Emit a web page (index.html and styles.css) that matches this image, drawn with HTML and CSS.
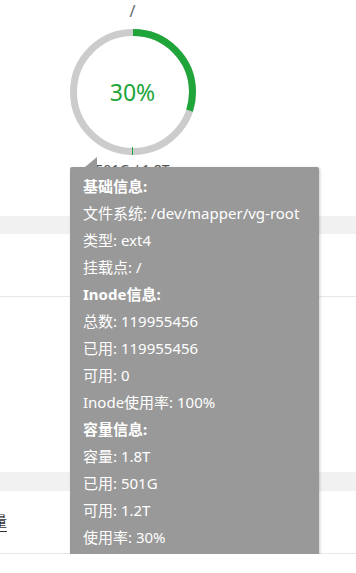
FILE: index.html
```html
<!DOCTYPE html>
<html lang="zh-CN">
<head>
    <meta charset="UTF-8">
    <meta name="viewport" content="width=device-width, initial-scale=1.0">
    <title>磁盘</title>
    <link rel="stylesheet" href="styles.css">
</head>
<body>
    <div class="page">
        <div class="chart-section">
            <div class="chart-box">
                <div class="mount">/</div>
                <div class="ring">
                    <svg width="126" height="126" viewBox="0 0 126 126">
                        <circle cx="63" cy="63" r="59.5" fill="none" stroke="#cccccc" stroke-width="7"/>
                        <circle cx="63" cy="63" r="59.5" fill="none" stroke="#20a53a" stroke-width="7"
                                stroke-dasharray="112.2 400" transform="rotate(-90 63 63)"/>
                        <line x1="62.5" y1="118" x2="62.5" y2="126" stroke="#20a53a" stroke-width="1"/>
                    </svg>
                    <span class="ring-value">30%</span>
                </div>
                <div class="usage">501G / 1.8T</div>
            </div>
        </div>
        <div class="band"></div>
        <div class="row"></div>
        <div class="blank"></div>
        <div class="band band-2"></div>
        <div class="row">
            <a class="link" href="#">容量</a>
        </div>

        <div class="tooltip">
            <span class="tooltip-arrow"></span>
            <div class="tip-head">基础信息:</div>
            <div>文件系统: /dev/mapper/vg-root</div>
            <div>类型: ext4</div>
            <div>挂载点: /</div>
            <div class="tip-head">Inode信息:</div>
            <div>总数: 119955456</div>
            <div>已用: 119955456</div>
            <div>可用: 0</div>
            <div>Inode使用率: 100%</div>
            <div class="tip-head">容量信息:</div>
            <div>容量: 1.8T</div>
            <div>已用: 501G</div>
            <div>可用: 1.2T</div>
            <div>使用率: 30%</div>
        </div>
    </div>
</body>
</html>
```

FILE: styles.css
```css
body {
    margin: 0;
    font-family: "Noto Sans", "Noto Sans CJK SC", sans-serif;
    font-size: 14px;
    color: #333;
    background: #fff;
}
.page {
    position: relative;
}
.chart-section {
    height: 216px;
}
.chart-box {
    width: 265px;
    display: flex;
    flex-direction: column;
    align-items: center;
}
.mount {
    font-size: 16px;
    line-height: 22px;
    color: #666;
}
.ring {
    position: relative;
    width: 126px;
    height: 126px;
    margin-top: 7px;
}
.ring svg {
    display: block;
}
.ring-value {
    position: absolute;
    left: 0;
    right: 0;
    top: 47px;
    text-align: center;
    font-size: 23px;
    line-height: 32px;
    color: #20a53a;
}
.usage {
    margin-top: 4px;
    line-height: 22px;
    color: #555;
}
.band {
    height: 18px;
    background: #f1f1f1;
}
.band-2 {
    height: 19px;
}
.row {
    height: 62px;
    border-bottom: 1px solid #e8e8e8;
    display: flex;
    align-items: center;
}
.blank {
    height: 175px;
}
.link {
    margin-left: -21px;
    padding-bottom: 1px;
    color: #333;
    font-size: 14px;
    line-height: 18px;
    text-decoration: none;
    border-bottom: 1px solid #333;
}
.tooltip {
    position: absolute;
    left: 70px;
    top: 167px;
    width: 249px;
    height: 390px;
    box-sizing: border-box;
    padding: 6px 13px;
    background: #999;
    border-radius: 2px;
    box-shadow: 1px 1px 3px rgba(0,0,0,0.2);
    color: #fff;
    font-size: 15px;
    line-height: 27px;
    white-space: nowrap;
}
.tooltip-arrow {
    position: absolute;
    top: -10px;
    left: 15px;
    width: 0;
    height: 0;
    border-left: 12px solid transparent;
    border-bottom: 10px solid #999;
}
.tip-head {
    font-weight: bold;
}
```
